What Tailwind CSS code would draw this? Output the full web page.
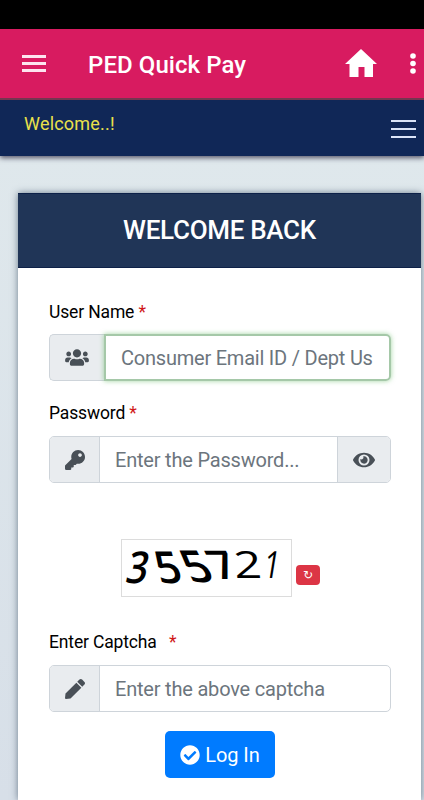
<!DOCTYPE html>
<html lang="en">

<head>
    <meta charset="UTF-8"/>
    <meta name="viewport" content="width=device-width, initial-scale=1.0"/>
    <title>PED Quick Pay</title>
    <script src="https://cdn.jsdelivr.net/npm/@tailwindcss/browser@4"></script>
</head>

<body class="font-[Roboto,sans-serif] text-black">
<div class="flex flex-col h-screen overflow-hidden bg-linear-to-b from-[#e1eaed] to-[#d7dfe8]">
    <!-- status bar -->
    <div class="h-[29px] shrink-0 bg-black"></div>

    <!-- app bar -->
    <div class="relative z-10 h-[71px] shrink-0 flex items-center bg-[#d81b60] border-b-2 border-[#743650] text-white pl-[22px] pr-2">
        <button class="flex flex-col gap-[4px] w-[24px]">
            <span class="h-[3px] w-full bg-[#fde4ef]"></span>
            <span class="h-[3px] w-full bg-[#fde4ef]"></span>
            <span class="h-[3px] w-full bg-[#fde4ef]"></span>
        </button>
        <div class="ml-[42px] mt-[3px] text-[24px] font-medium leading-none tracking-[0.07px] whitespace-nowrap">PED Quick Pay</div>
        <svg class="ml-auto -mt-[2px] w-8 h-7" viewBox="0 0 32 28" fill="currentColor">
            <path d="M16 0L32 15h-4v13h-8.500V18h-6v10H4.500V15H0z"></path>
        </svg>
        <svg class="ml-[33px] w-[6px] h-[21px]" viewBox="0 0 6 21" fill="currentColor">
            <circle cx="3" cy="3" r="2.800"></circle>
            <circle cx="3" cy="10.500" r="2.800"></circle>
            <circle cx="3" cy="18" r="2.800"></circle>
        </svg>
    </div>

    <!-- welcome bar -->
    <div class="h-[56px] shrink-0 flex justify-between bg-[#102757] pl-6 pr-2 shadow-[0_2px_5px_rgba(30,25,50,0.7)]">
        <div class="mt-[13px] text-[18px] leading-[21px] tracking-[0.2px] text-[#e9e04b]">Welcome..!</div>
        <button class="mt-[20px] h-[18px] w-[25px] flex flex-col justify-between">
            <span class="h-[2px] w-full bg-[#dbe4f8]"></span>
            <span class="h-[2px] w-full bg-[#dbe4f8]"></span>
            <span class="h-[2px] w-full bg-[#dbe4f8]"></span>
        </button>
    </div>

    <!-- login card -->
    <div class="mt-[37px] ml-[18px] mr-[3px] flex-1 bg-white shadow-[0_0_7px_rgba(60,80,100,0.7)]">
        <div class="h-[75px] flex items-center justify-center bg-[#203557] border-y border-[#0d2148] text-white text-[26px] font-medium">
            <span class="tracking-[-0.3px]">WELCOME BACK</span>
        </div>
        <div class="pl-[31px] pr-[30px] pt-[33px]">
            <div class="h-[21px] leading-[23px] text-[17.5px] tracking-[-0.15px]">User Name <span class="text-[#d01818]">*</span></div>
            <div class="mt-[12px] flex h-[47px]">
                <div class="w-[55px] shrink-0 flex items-center justify-center rounded-l-[5px] border border-r-0 border-[#ced4da] bg-[#e9ecef] text-[#495057]">
                    <svg class="w-6 h-[19px]" viewBox="0 0 640 512" fill="currentColor">
                        <path d="M96 224c35.300 0 64-28.700 64-64s-28.700-64-64-64-64 28.700-64 64 28.700 64 64 64zm448 0c35.300 0 64-28.700 64-64s-28.700-64-64-64-64 28.700-64 64 28.700 64 64 64zm32 32h-64c-17.600 0-33.500 7.100-45.100 18.600 40.300 22.100 68.900 62 75.100 109.400h66c17.700 0 32-14.300 32-32v-32c0-35.300-28.700-64-64-64zm-256 0c61.900 0 112-50.100 112-112S381.900 32 320 32 208 82.100 208 144s50.100 112 112 112zm76.800 32h-8.300c-20.800 10-43.900 16-68.500 16s-47.600-6-68.500-16h-8.300C179.600 288 128 339.600 128 403.200V432c0 26.500 21.500 48 48 48h288c26.500 0 48-21.500 48-48v-28.800c0-63.600-51.600-115.200-115.200-115.200zm-223.700-13.400C161.500 263.100 145.600 256 128 256H64c-35.300 0-64 28.700-64 64v32c0 17.700 14.300 32 32 32h65.900c6.300-47.400 34.900-87.300 75.200-109.400z"></path>
                    </svg>
                </div>
                <div class="flex-1 min-w-0 flex items-center rounded-r-[5px] border-2 border-[#a5c8a8] px-[15px] shadow-[0_0_5px_rgba(110,190,110,0.65)]">
                    <div class="whitespace-nowrap text-[20px] tracking-[-0.22px] text-[#6c757d]">Consumer Email ID / Dept Us</div>
                </div>
            </div>

            <div class="mt-[21px] h-[21px] leading-[23px] text-[17.5px] tracking-[-0.15px]">Password <span class="text-[#d01818]">*</span></div>
            <div class="mt-[13px] flex h-[47px] rounded-[5px] border border-[#ced4da] overflow-hidden">
                <div class="w-[50px] shrink-0 flex items-center justify-center border-r border-[#ced4da] bg-[#e9ecef] text-[#495057]">
                    <svg class="w-5 h-5" viewBox="0 0 512 512" fill="currentColor">
                        <path d="M512 176.001C512 273.203 433.202 352 336 352c-11.220 0-22.190-1.062-32.827-3.069l-24.012 27.014A23.999 23.999 0 0 1 261.223 384H224v40c0 13.255-10.745 24-24 24h-40v40c0 13.255-10.745 24-24 24H24c-13.255 0-24-10.745-24-24v-78.059c0-6.365 2.529-12.470 7.029-16.971l161.802-161.802C163.108 213.814 160 195.271 160 176 160 78.798 238.797.001 335.999 0 433.488-.001 512 78.511 512 176.001zM336 128c0 26.510 21.490 48 48 48s48-21.490 48-48-21.490-48-48-48-48 21.490-48 48z"></path>
                    </svg>
                </div>
                <div class="flex-1 flex items-center pl-[15px] whitespace-nowrap text-[20px] tracking-[-0.2px] text-[#6c757d]">Enter the Password...</div>
                <div class="w-[53px] shrink-0 flex items-center justify-center border-l border-[#ced4da] bg-[#e9ecef] text-[#495057]">
                    <svg class="w-[22px] h-5" viewBox="0 0 576 512" fill="currentColor">
                        <path d="M572.520 241.400C518.290 135.590 410.930 64 288 64S57.680 135.640 3.480 241.410a32.350 32.350 0 0 0 0 29.190C57.710 376.410 165.070 448 288 448s230.320-71.640 284.520-177.410a32.350 32.350 0 0 0 0-29.190zM288 400a144 144 0 1 1 144-144 143.930 143.930 0 0 1-144 144zm0-240a95.310 95.310 0 0 0-25.310 3.790 47.850 47.850 0 0 1-66.900 66.900A95.780 95.780 0 1 0 288 160z"></path>
                    </svg>
                </div>
            </div>

            <!-- captcha -->
            <div class="mt-[56px] ml-[72px] flex items-end h-[58px]">
                <div class="relative w-[171px] h-[58px] border border-[#dcdcdc] bg-white text-[44px] leading-[44px] font-semibold font-['Open_Sans',sans-serif]">
                    <span class="absolute left-[4px] top-[4px] skew-x-[-14deg] scale-x-85">3</span>
                    <span class="absolute left-[33px] top-[4px] skew-x-[16deg] scale-x-100">5</span>
                    <span class="absolute left-[61px] top-[3px] skew-x-[26deg] scale-x-105">5</span>
                    <span class="absolute left-[87px] top-[2px] skew-x-[24deg] scale-y-90">7</span>
                    <span class="absolute left-[113px] top-[2px] skew-x-[4deg] scale-y-85 scale-x-110 font-medium">2</span>
                    <span class="absolute left-[138px] top-[2px] skew-x-[-12deg] scale-x-65 scale-y-85 font-normal">1</span>
                </div>
                <button class="ml-[4px] mb-[12px] w-[24px] h-[20px] flex items-center justify-center rounded-[4px] bg-[#dc3545] text-white text-[12px] leading-none font-['DejaVu_Sans',sans-serif]">↻</button>
            </div>

            <div class="mt-[34px] h-[21px] leading-[23px] text-[17.5px] tracking-[-0.15px]">Enter Captcha <span class="ml-[8px] text-[#d01818]">*</span></div>
            <div class="mt-[13px] flex h-[47px] rounded-[5px] border border-[#ced4da] overflow-hidden">
                <div class="w-[50px] shrink-0 flex items-center justify-center border-r border-[#ced4da] bg-[#e9ecef] text-[#495057]">
                    <svg class="w-5 h-5" viewBox="0 0 512 512" fill="currentColor">
                        <path d="M290.740 93.240l128.020 128.020-277.990 277.990-114.140 12.600C11.350 513.540-1.560 500.620.14 485.340l12.700-114.220 277.900-277.880zm207.200-19.060l-60.110-60.110c-18.750-18.750-49.160-18.750-67.910 0l-56.550 56.550 128.020 128.020 56.550-56.550c18.750-18.760 18.750-49.160 0-67.910z"></path>
                    </svg>
                </div>
                <div class="flex-1 flex items-center pl-[15px] whitespace-nowrap text-[20px] tracking-[-0.2px] text-[#6c757d]">Enter the above captcha</div>
            </div>

            <button class="mt-[19px] mx-auto w-[110px] h-[47px] flex items-center justify-center gap-[5px] rounded-[5px] bg-[#007bff] text-white text-[20px]">
                <svg class="w-5 h-5" viewBox="0 0 512 512" fill="currentColor">
                    <path d="M504 256c0 136.967-111.033 248-248 248S8 392.967 8 256 119.033 8 256 8s248 111.033 248 248zM227.314 387.314l184-184c6.248-6.248 6.248-16.379 0-22.627l-22.627-22.627c-6.248-6.248-16.379-6.249-22.628 0L216 308.118l-70.059-70.059c-6.248-6.248-16.379-6.248-22.628 0l-22.627 22.627c-6.248 6.248-6.248 16.379 0 22.627l104 104c6.249 6.249 16.379 6.249 22.628.001z"></path>
                </svg>
                <span class="tracking-[-0.1px]">Log In</span>
            </button>
        </div>
    </div>
</div>
</body>

</html>
